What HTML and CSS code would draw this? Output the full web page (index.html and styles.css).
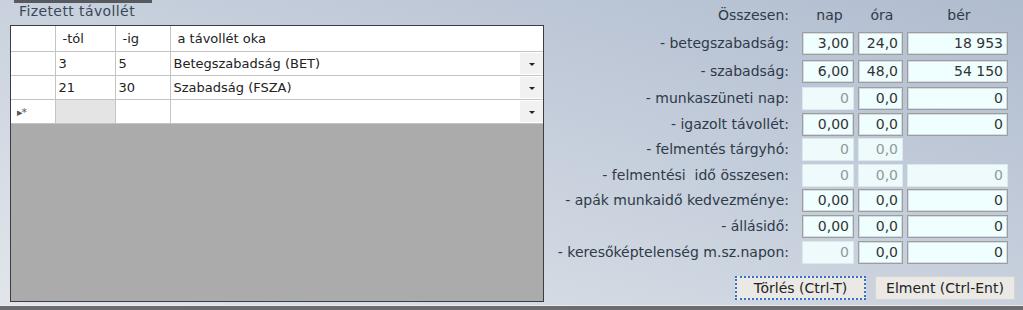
FILE: index.html
```html
<!DOCTYPE html>
<html lang="hu">
<head>
    <meta charset="UTF-8">
    <title>Fizetett távollét</title>
    <link rel="stylesheet" href="styles.css">
</head>
<body>
    <div class="window">
        <div class="main">
            <div class="left">
                <div class="tab">Fizetett távollét</div>
                <div class="grid">
                    <table>
                        <tr class="head">
                            <td class="rh"></td>
                            <td class="c1">-tól</td>
                            <td class="c2">-ig</td>
                            <td class="c3">a távollét oka</td>
                        </tr>
                        <tr>
                            <td class="rh"></td>
                            <td>3</td>
                            <td>5</td>
                            <td class="combo"><span>Betegszabadság (BET)</span><i class="drop"></i></td>
                        </tr>
                        <tr>
                            <td class="rh"></td>
                            <td>21</td>
                            <td>30</td>
                            <td class="combo"><span>Szabadság (FSZA)</span><i class="drop"></i></td>
                        </tr>
                        <tr class="newrow">
                            <td class="rh"><span class="mark">&#9656;*</span></td>
                            <td class="sel"></td>
                            <td></td>
                            <td class="combo"><span></span><i class="drop"></i></td>
                        </tr>
                    </table>
                </div>
            </div>

            <div class="right">
                <div class="sum">
                    <div class="lbl top">Összesen:</div>
                    <div class="colhead">nap</div>
                    <div class="colhead">óra</div>
                    <div class="colhead">bér</div>

                    <div class="lbl">- betegszabadság:</div>
                    <div class="box">3,00</div>
                    <div class="box">24,0</div>
                    <div class="box">18 953</div>

                    <div class="lbl">- szabadság:</div>
                    <div class="box">6,00</div>
                    <div class="box">48,0</div>
                    <div class="box">54 150</div>

                    <div class="lbl">- munkaszüneti nap:</div>
                    <div class="box ro">0</div>
                    <div class="box">0,0</div>
                    <div class="box">0</div>

                    <div class="lbl">- igazolt távollét:</div>
                    <div class="box">0,00</div>
                    <div class="box">0,0</div>
                    <div class="box">0</div>

                    <div class="lbl">- felmentés tárgyhó:</div>
                    <div class="box ro">0</div>
                    <div class="box ro">0,0</div>
                    <div></div>

                    <div class="lbl">- felmentési&nbsp; idő összesen:</div>
                    <div class="box ro">0</div>
                    <div class="box ro">0,0</div>
                    <div class="box ro">0</div>

                    <div class="lbl">- apák munkaidő kedvezménye:</div>
                    <div class="box">0,00</div>
                    <div class="box">0,0</div>
                    <div class="box">0</div>

                    <div class="lbl">- állásidő:</div>
                    <div class="box">0,00</div>
                    <div class="box">0,0</div>
                    <div class="box">0</div>

                    <div class="lbl">- keresőképtelenség m.sz.napon:</div>
                    <div class="box ro">0</div>
                    <div class="box">0,0</div>
                    <div class="box">0</div>
                </div>
                <div class="buttons">
                    <div class="btn focus">Törlés (Ctrl-T)</div>
                    <div class="btn wide">Elment (Ctrl-Ent)</div>
                </div>
            </div>
        </div>
        <div class="status"></div>
    </div>
</body>
</html>
```

FILE: styles.css
```css
*{
    padding: 0;
    margin: 0;
    box-sizing: border-box;
}
body{
    width: 1023px;
    height: 310px;
    overflow: hidden;
    font-family: "DejaVu Sans", Verdana, sans-serif;
    font-size: 13px;
    color: #2e3a48;
}
.window{
    width: 1023px;
    height: 310px;
    display: flex;
    flex-direction: column;
    background: linear-gradient(to bottom left, #b0bccf 0%, #c6cfdc 45%, #e2e6eb 100%);
}
.main{
    flex: 1;
    display: flex;
}
.status{
    height: 5px;
    border-top: 1px solid #e9ecef;
    background-color: #6a6c70;
}

/* bal oldal: tabla */
.left{
    width: 544px;
    padding-left: 10px;
}
.tab{
    margin-left: 4px;
    width: 138px;
    height: 25px;
    border-top: 3px solid #56595e;
    padding-left: 5px;
    font-size: 14px;
    letter-spacing: 0.4px;
    line-height: 16px;
    color: #3b4757;
}
.grid{
    height: 277px;
    border: 1px solid #3a3d42;
    background-color: #ababab;
}
table{
    width: 100%;
    border-collapse: collapse;
    background-color: #fff;
    color: #222;
}
td{
    height: 24px;
    border-right: 1px solid #c4c4c4;
    border-bottom: 1px solid #c4c4c4;
    padding: 0 3px;
    white-space: nowrap;
}
td:last-child{border-right: none;}
.rh{width: 44px;}
.head td{height: 25px; padding-left: 7px;}
.head .c1{width: 60px;}
.head .c2{width: 55px;}
.combo{
    position: relative;
}
.drop{
    position: absolute;
    right: 0;
    top: 1px;
    bottom: 1px;
    width: 23px;
    background-color: #f1f1f1;
}
.drop:after{
    content: '';
    position: absolute;
    left: 9px;
    top: 10px;
    border-left: 3px solid transparent;
    border-right: 3px solid transparent;
    border-top: 3px solid #222;
}
.sel{background-color: #e4e4e4;}
.mark{
    font-size: 11px;
    color: #555;
    letter-spacing: -1px;
    padding-left: 3px;
}

/* jobb oldal: osszesites */
.right{
    flex: 1;
    display: flex;
    flex-direction: column;
    padding-right: 8px;
    font-size: 14px;
}
.sum{
    display: grid;
    grid-template-columns: 1fr 52px 45px 101px;
    /* sorok: fejlec, betegszab., szabadsag, munkaszuneti, majd egyenletes */
    grid-template-rows: 32px 23px 28px 27px repeat(6, 25.6px);
    column-gap: 4px;
    padding-right: 7px;
}
.sum > *{
    align-self: end;
    height: 23px;
}
.lbl{
    text-align: right;
    padding-right: 9px;
    line-height: 23px;
    white-space: nowrap;
}
.sum .top,
.sum .colhead{
    align-self: start;
    padding-top: 7px;
    height: auto;
    line-height: 17px;
}
.colhead{
    text-align: center;
    padding-left: 3px;
}
.box{
    background-color: #effefe;
    border: 1px solid #9b9d9f;
    box-shadow: inset 0 0 0 1px #d9dcdc;
    text-align: right;
    padding-right: 4px;
    line-height: 21px;
    color: #333;
}
.box.ro{
    background-color: #eefafb;
    border-color: #dde8ea;
    box-shadow: none;
    color: #8c9a9c;
}

.buttons{
    display: flex;
    justify-content: flex-end;
    gap: 9px;
    margin-top: 12px;
}
.btn{
    width: 131px;
    height: 24px;
    line-height: 22px;
    text-align: center;
    background-color: #ebe9e5;
    border: 1px solid #d6d4cf;
    color: #222;
}
.btn.wide{width: 140px;}
.btn.focus{
    border: 2px dotted #3a6fc8;
    line-height: 20px;
}
```
